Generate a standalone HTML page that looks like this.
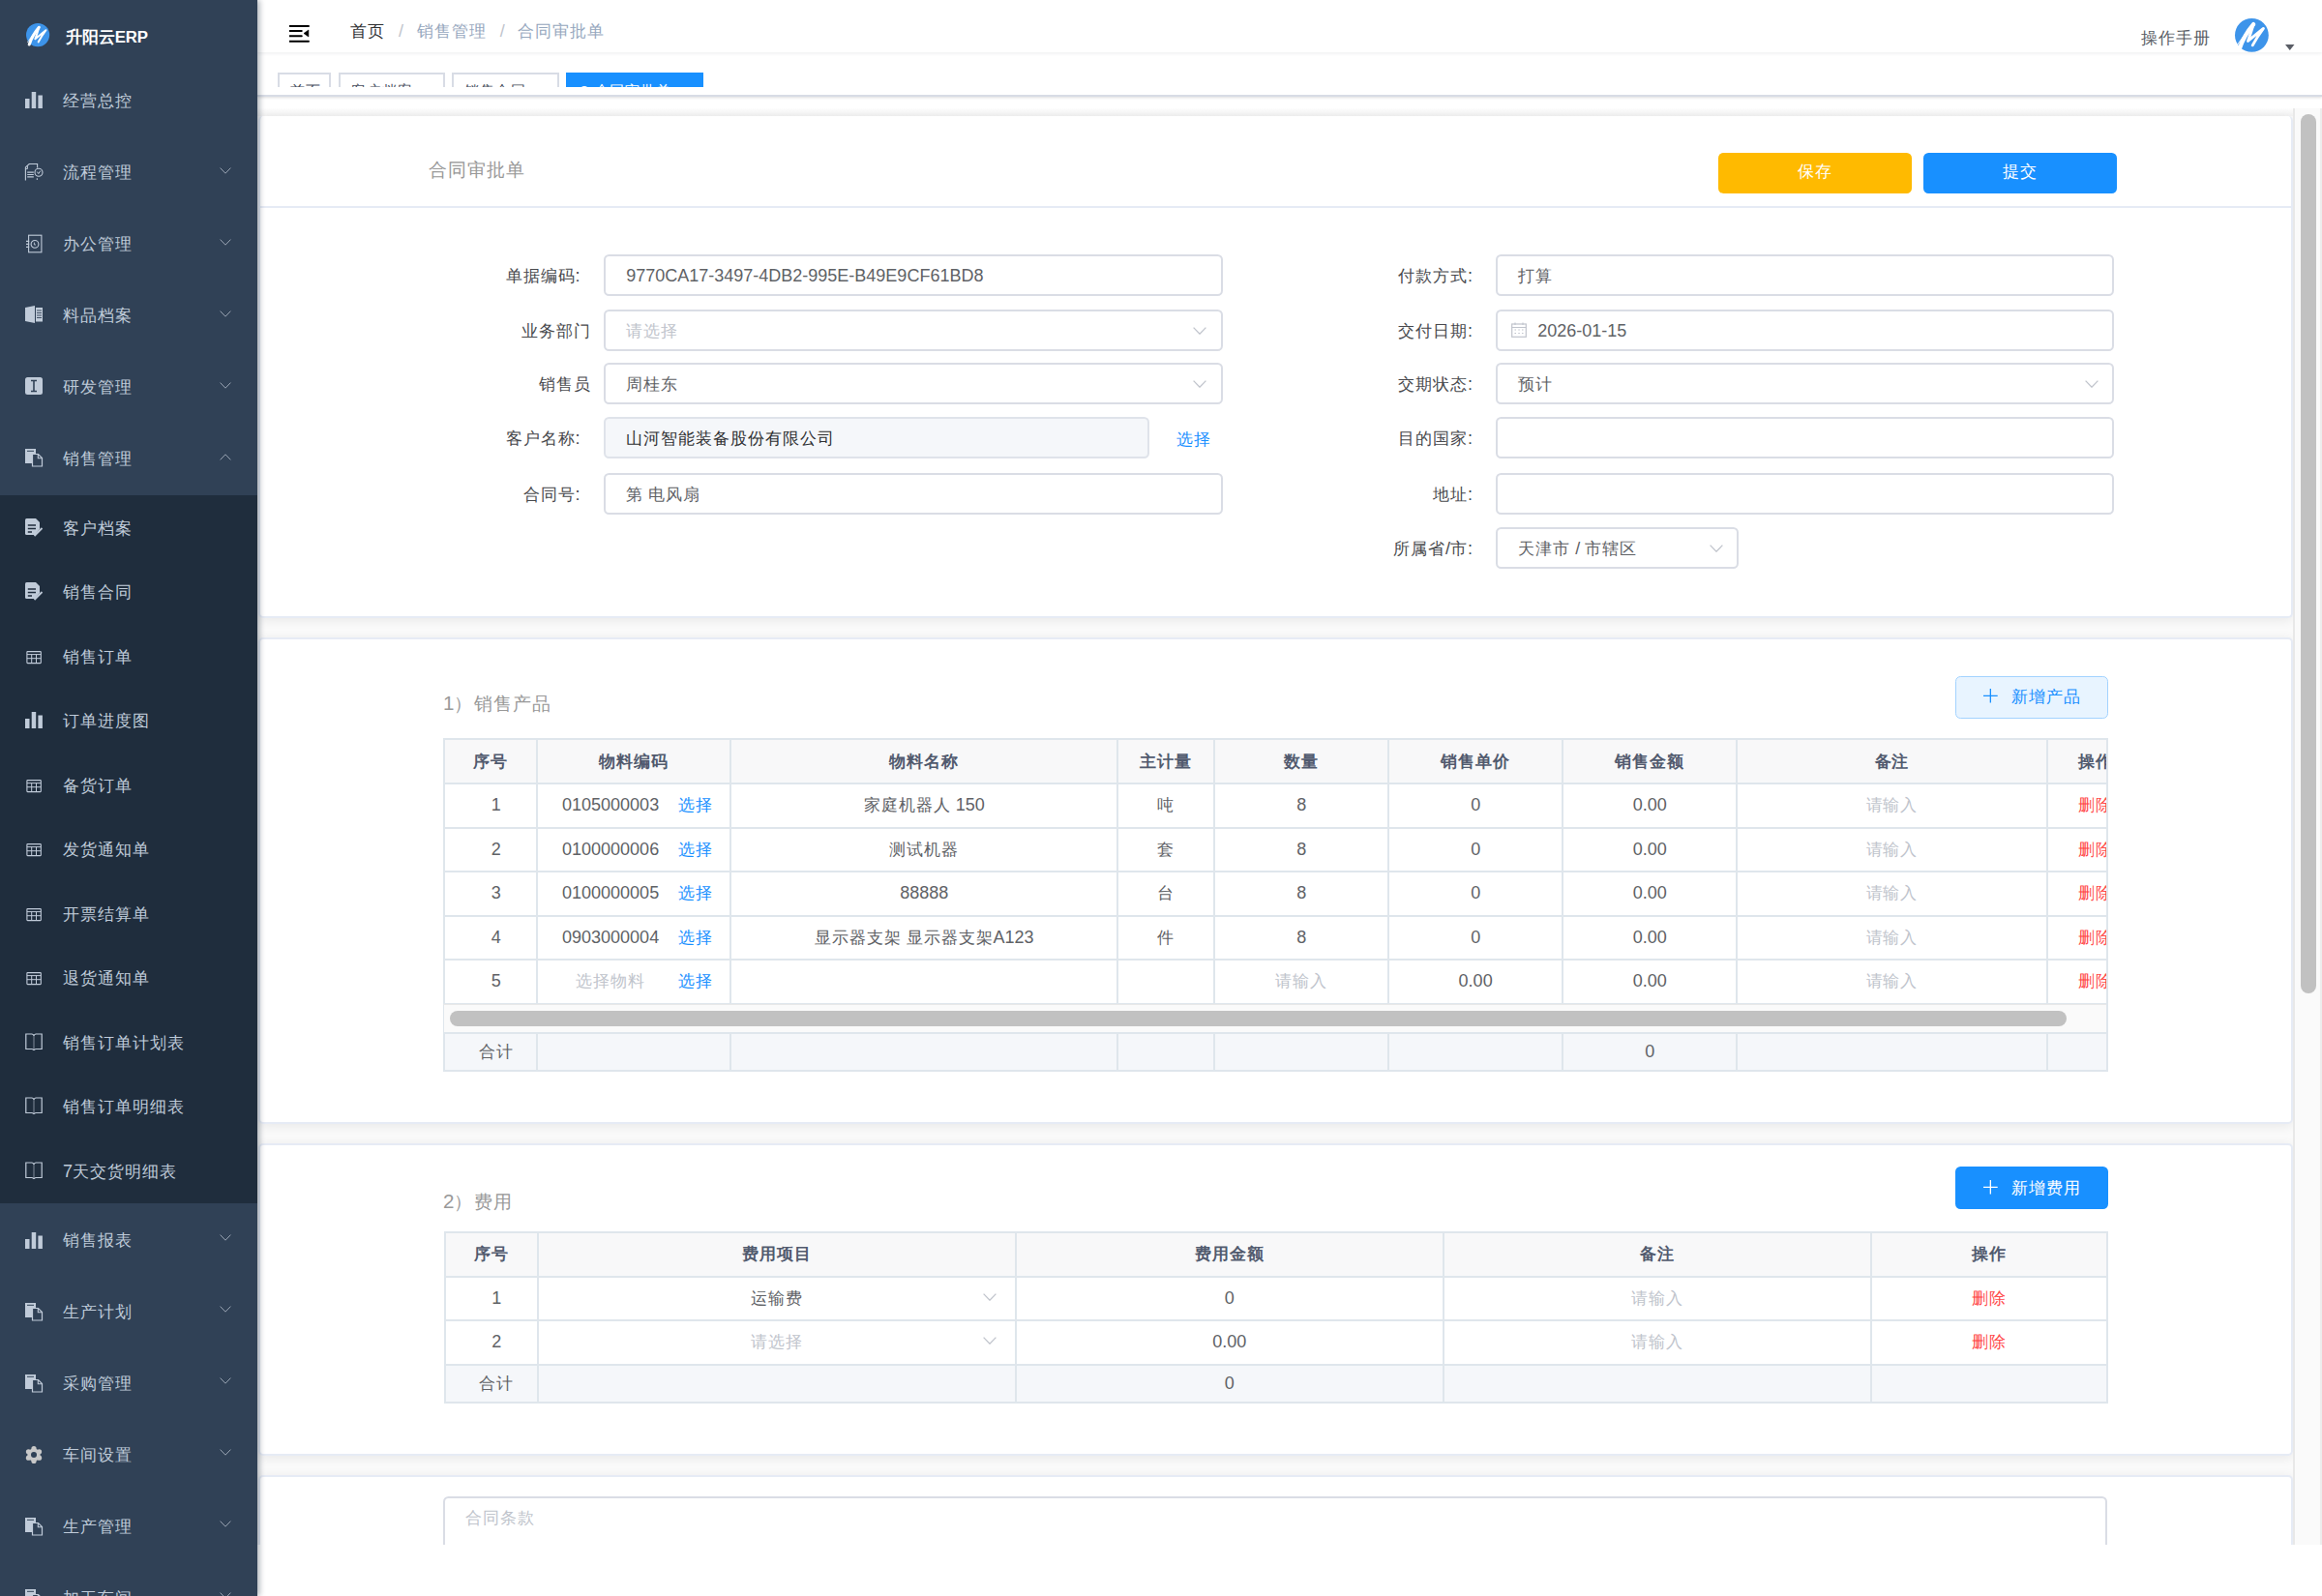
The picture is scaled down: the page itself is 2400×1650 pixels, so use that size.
<!DOCTYPE html>
<html><head><meta charset="utf-8"><style>
*{box-sizing:border-box;margin:0;padding:0}
html,body{width:2400px;height:1650px;overflow:hidden;background:#fff;font-family:"Liberation Sans",sans-serif;color:#606266}
.c{font-size:.944em;letter-spacing:.056em}
.abs{position:absolute}
#sidebar{position:absolute;left:0;top:0;width:266px;height:1650px;background:#304156;z-index:5;box-shadow:2px 0 6px rgba(0,21,41,.35)}
.mt{position:absolute;left:65px;color:#bfcbd9;font-size:18px;white-space:nowrap;margin-top:-1px}
.sub{position:absolute;left:0;top:512px;width:266px;height:732px;background:#1f2d3d}
#header{position:absolute;left:266px;top:0;width:2134px;height:54px;background:#fff;box-shadow:0 1px 4px rgba(0,21,41,.08);z-index:3}
#tags{position:absolute;left:266px;top:54px;width:2134px;height:46px;background:#fff;border-bottom:2px solid #d8dce5;box-shadow:0 1px 3px 0 rgba(0,0,0,.12),0 0 3px 0 rgba(0,0,0,.04);z-index:2}
.clip{position:absolute;left:0;top:21px;width:2134px;height:15px;overflow:hidden}
.tag{position:absolute;top:0;height:40px;border:2px solid #d8dce5;font-size:15.43px;line-height:20px;color:#495060;white-space:nowrap;padding-top:7px;padding-left:11px}
#main{position:absolute;left:266px;top:98px;width:2134px;height:1499px;background:#fff;overflow:hidden;z-index:1}
.card{position:absolute;left:0.5px;width:2103.5px;background:#fff;border:2px solid #e6ebf5;border-radius:5px;box-shadow:0 2px 12px 0 rgba(0,0,0,.08)}
.vscroll{position:absolute;left:2104px;top:14px;width:30px;height:1485px;background:#fafafa;border-left:2px solid #e8e8e8;border-right:2px solid #ededed}
.vscroll .th{position:absolute;left:6px;top:6px;width:16px;height:909px;border-radius:8px;background:#c1c1c1}
.lbl{position:absolute;font-size:18px;color:#48494d;white-space:nowrap;text-align:right;line-height:45px;height:43px}
.inp{position:absolute;height:43px;border:2px solid #dadde5;border-radius:5.5px;background:#fff;font-size:18px;color:#606266;line-height:41px;padding-left:21px;white-space:nowrap}
.inp.dis{background:#f5f7fa;border-color:#dfe3ea;color:#303133}
.ph{color:#c0c4cc}
.btn{position:absolute;border-radius:5.33px;font-size:18px;color:#fff;text-align:center;white-space:nowrap}
.ttl{position:absolute;font-size:20.57px;color:#999;white-space:nowrap;line-height:24px}
.tb{position:absolute;border-collapse:collapse;table-layout:fixed;font-size:18px;color:#606266}
.tb td,.tb th{border:2px solid #dfe6ec;text-align:center;white-space:nowrap;overflow:hidden;padding:0}
.tb th{background:#f8f8f9;color:#515a6e;font-weight:bold;height:46px}
.tb td{height:45.5px}
.tb tr.ft td{background:#f5f7fa;height:39.6px}
.lnk{color:#1890ff}
.del{color:#ff4949}
</style></head><body>
<div id="sidebar">
<svg class="abs" style="left:26.9px;top:24.2px;overflow:visible" width="24.2" height="24.2" viewBox="0 0 24 24"><circle cx="12" cy="12" r="12" fill="#3d94ea"/><path d="M3.2 21.8 Q6.5 12 13.2 4.2" stroke="#fff" stroke-width="3" fill="none" stroke-linecap="round"/><path d="M13.2 4.4 Q11.5 10 9.3 16.2 L20.3 7.2 Q16 13 12.6 19.2" stroke="#fff" stroke-width="2" fill="none" stroke-linecap="round" stroke-linejoin="round"/><path d="M1.3 19.6 L5.8 13.2 M2.6 22.6 L5 19.5" stroke="#fff" stroke-width="0.8" stroke-linecap="round" opacity=".8"/></svg>
<div class="mt" style="left:67.5px;top:25.5px;line-height:26px;color:#fff;font-weight:600"><span style="font-size:17px;letter-spacing:0.1px">升阳云</span><span style="font-size:16.8px;letter-spacing:-0.2px">ERP</span></div>
<div class="mt" style="top:68px;line-height:74px"><span class="c">经营总控</span></div>
<svg class="abs" style="left:26px;top:93.5px;overflow:visible" width="18" height="18" viewBox="0 0 18 18"><rect x="0" y="8" width="4.5" height="10" fill="#c0cbd9"/><rect x="6.7" y="1" width="4.5" height="17" fill="#c0cbd9"/><rect x="13.4" y="4.5" width="4.5" height="13.5" fill="#c0cbd9"/></svg>
<div class="mt" style="top:142px;line-height:74px"><span class="c">流程管理</span></div>
<svg class="abs" style="left:26px;top:167.5px;overflow:visible" width="18" height="18" viewBox="0 0 18 18"><path d="M0.4 18.4 V4.9 L4.2 1.5 H12.6 V5.6" stroke="#c0cbd9" stroke-width="1.1" fill="none"/><path d="M2.4 3.4 V6.6 H0.6" stroke="#c0cbd9" stroke-width="1" fill="none"/><path d="M2.2 10.1 H8.8 M2.2 12.5 H8.8 M2.2 14.9 H8.8" stroke="#c0cbd9" stroke-width="1.1"/><circle cx="14" cy="10.3" r="4" stroke="#c0cbd9" stroke-width="1.1" fill="none"/><path d="M12.3 9.6 L13.8 11.6 L15.8 8.6" stroke="#c0cbd9" stroke-width="1" fill="none"/><path d="M12.3 16.2 V18" stroke="#c0cbd9" stroke-width="1"/></svg>
<svg class="abs" style="left:227px;top:172.5px" width="12" height="7" viewBox="0 0 12 7"><path d="M0.6 0.6 L6.0 6.2 L11.4 0.6" stroke="#9aa5b4" stroke-width="1" fill="none"/></svg>
<div class="mt" style="top:216px;line-height:74px"><span class="c">办公管理</span></div>
<svg class="abs" style="left:26px;top:241.5px;overflow:visible" width="18" height="18" viewBox="0 0 18 18"><rect x="3.6" y="1.2" width="13.3" height="17.6" stroke="#c0cbd9" stroke-width="1.1" fill="none"/><circle cx="10" cy="10.4" r="3.9" stroke="#c0cbd9" stroke-width="1.1" fill="none"/><path d="M9.4 8.6 V11 H11" stroke="#c0cbd9" stroke-width="0.9" fill="none"/><path d="M1 7.3 H4.2 M1 10.4 H4.2 M1 13.3 H4.2" stroke="#c0cbd9" stroke-width="1.2"/></svg>
<svg class="abs" style="left:227px;top:246.5px" width="12" height="7" viewBox="0 0 12 7"><path d="M0.6 0.6 L6.0 6.2 L11.4 0.6" stroke="#9aa5b4" stroke-width="1" fill="none"/></svg>
<div class="mt" style="top:290px;line-height:74px"><span class="c">料品档案</span></div>
<svg class="abs" style="left:26px;top:315.5px;overflow:visible" width="18" height="18" viewBox="0 0 18 18"><path d="M0 2 L10 0 V18 L0 16 Z" fill="#c0cbd9"/><rect x="11" y="2" width="7" height="14.5" fill="#c0cbd9"/><path d="M12 5 H17 M12 7.5 H17 M12 10 H17 M12 12.5 H17" stroke="#304156" stroke-width="0.9"/></svg>
<svg class="abs" style="left:227px;top:320.5px" width="12" height="7" viewBox="0 0 12 7"><path d="M0.6 0.6 L6.0 6.2 L11.4 0.6" stroke="#9aa5b4" stroke-width="1" fill="none"/></svg>
<div class="mt" style="top:364px;line-height:74px"><span class="c">研发管理</span></div>
<svg class="abs" style="left:26px;top:389.5px;overflow:visible" width="18" height="18" viewBox="0 0 18 18"><rect x="0" y="0" width="18" height="18" rx="2.5" fill="#c0cbd9"/><path d="M6 3.5 H12 M9 3.5 V14.5 M6 14.5 H12" stroke="#304156" stroke-width="1.6"/></svg>
<svg class="abs" style="left:227px;top:394.5px" width="12" height="7" viewBox="0 0 12 7"><path d="M0.6 0.6 L6.0 6.2 L11.4 0.6" stroke="#9aa5b4" stroke-width="1" fill="none"/></svg>
<div class="mt" style="top:438px;line-height:74px"><span class="c">销售管理</span></div>
<svg class="abs" style="left:26px;top:463.5px;overflow:visible" width="18" height="18" viewBox="0 0 18 18"><rect x="0" y="0" width="11" height="15" fill="#c0cbd9"/><path d="M2 2.3 H9" stroke="#304156" stroke-width="1"/><path d="M7.5 5.5 H13.5 L17.5 9.5 V18 H7.5 Z" fill="#304156" stroke="#c0cbd9" stroke-width="1.2"/><path d="M13.3 5.8 V9.7 H17.3" stroke="#c0cbd9" stroke-width="1.1" fill="none"/></svg>
<svg class="abs" style="left:227px;top:469px" width="12" height="7" viewBox="0 0 12 7"><path d="M0.6 6.4 L6.0 0.8 L11.4 6.4" stroke="#9aa5b4" stroke-width="1" fill="none"/></svg>
<div class="sub"></div>
<div class="mt" style="top:513.50px;line-height:66.54px"><span class="c">客户档案</span></div>
<svg class="abs" style="left:26px;top:535.5px;overflow:visible" width="18" height="18" viewBox="0 0 18 18"><path d="M0 1.5 Q0 0 1.5 0 H11 L15 4 V11 L10 17 H1.5 Q0 17 0 15.5 Z" fill="#c0cbd9"/><path d="M2.8 7 H11 M2.8 10.5 H11 M2.8 14 H7" stroke="#1f2d3d" stroke-width="1.3"/><path d="M9.5 18 L17.5 10" stroke="#c0cbd9" stroke-width="1.8"/></svg>
<div class="mt" style="top:580.04px;line-height:66.54px"><span class="c">销售合同</span></div>
<svg class="abs" style="left:26px;top:602.04px;overflow:visible" width="18" height="18" viewBox="0 0 18 18"><path d="M0 1.5 Q0 0 1.5 0 H11 L15 4 V11 L10 17 H1.5 Q0 17 0 15.5 Z" fill="#c0cbd9"/><path d="M2.8 7 H11 M2.8 10.5 H11 M2.8 14 H7" stroke="#1f2d3d" stroke-width="1.3"/><path d="M9.5 18 L17.5 10" stroke="#c0cbd9" stroke-width="1.8"/></svg>
<div class="mt" style="top:646.58px;line-height:66.54px"><span class="c">销售订单</span></div>
<svg class="abs" style="left:26px;top:668.58px;overflow:visible" width="18" height="18" viewBox="0 0 18 18"><rect x="1.9" y="4.6" width="14.4" height="12" rx="0.6" stroke="#c0cbd9" stroke-width="1.1" fill="none"/><path d="M1.9 7.6 H16.3 M1.9 11.7 H16.3 M6.7 7.6 V16.6 M11.5 7.6 V16.6" stroke="#c0cbd9" stroke-width="1"/></svg>
<div class="mt" style="top:713.12px;line-height:66.54px"><span class="c">订单进度图</span></div>
<svg class="abs" style="left:26px;top:735.12px;overflow:visible" width="18" height="18" viewBox="0 0 18 18"><rect x="0" y="8" width="4.5" height="10" fill="#c0cbd9"/><rect x="6.7" y="1" width="4.5" height="17" fill="#c0cbd9"/><rect x="13.4" y="4.5" width="4.5" height="13.5" fill="#c0cbd9"/></svg>
<div class="mt" style="top:779.66px;line-height:66.54px"><span class="c">备货订单</span></div>
<svg class="abs" style="left:26px;top:801.66px;overflow:visible" width="18" height="18" viewBox="0 0 18 18"><rect x="1.9" y="4.6" width="14.4" height="12" rx="0.6" stroke="#c0cbd9" stroke-width="1.1" fill="none"/><path d="M1.9 7.6 H16.3 M1.9 11.7 H16.3 M6.7 7.6 V16.6 M11.5 7.6 V16.6" stroke="#c0cbd9" stroke-width="1"/></svg>
<div class="mt" style="top:846.20px;line-height:66.54px"><span class="c">发货通知单</span></div>
<svg class="abs" style="left:26px;top:868.2px;overflow:visible" width="18" height="18" viewBox="0 0 18 18"><rect x="1.9" y="4.6" width="14.4" height="12" rx="0.6" stroke="#c0cbd9" stroke-width="1.1" fill="none"/><path d="M1.9 7.6 H16.3 M1.9 11.7 H16.3 M6.7 7.6 V16.6 M11.5 7.6 V16.6" stroke="#c0cbd9" stroke-width="1"/></svg>
<div class="mt" style="top:912.74px;line-height:66.54px"><span class="c">开票结算单</span></div>
<svg class="abs" style="left:26px;top:934.74px;overflow:visible" width="18" height="18" viewBox="0 0 18 18"><rect x="1.9" y="4.6" width="14.4" height="12" rx="0.6" stroke="#c0cbd9" stroke-width="1.1" fill="none"/><path d="M1.9 7.6 H16.3 M1.9 11.7 H16.3 M6.7 7.6 V16.6 M11.5 7.6 V16.6" stroke="#c0cbd9" stroke-width="1"/></svg>
<div class="mt" style="top:979.28px;line-height:66.54px"><span class="c">退货通知单</span></div>
<svg class="abs" style="left:26px;top:1001.28px;overflow:visible" width="18" height="18" viewBox="0 0 18 18"><rect x="1.9" y="4.6" width="14.4" height="12" rx="0.6" stroke="#c0cbd9" stroke-width="1.1" fill="none"/><path d="M1.9 7.6 H16.3 M1.9 11.7 H16.3 M6.7 7.6 V16.6 M11.5 7.6 V16.6" stroke="#c0cbd9" stroke-width="1"/></svg>
<div class="mt" style="top:1045.82px;line-height:66.54px"><span class="c">销售订单计划表</span></div>
<svg class="abs" style="left:26px;top:1067.82px;overflow:visible" width="18" height="18" viewBox="0 0 18 18"><path d="M0.8 1 H7 Q9 1.5 9 3 Q9 1.5 11 1 H17.2 V16.5 H11 Q9 17 9 18 Q9 17 7 16.5 H0.8 Z" stroke="#c0cbd9" stroke-width="1.2" fill="none"/><path d="M9 3 V17.5" stroke="#c0cbd9" stroke-width="1" opacity=".6"/></svg>
<div class="mt" style="top:1112.36px;line-height:66.54px"><span class="c">销售订单明细表</span></div>
<svg class="abs" style="left:26px;top:1134.36px;overflow:visible" width="18" height="18" viewBox="0 0 18 18"><path d="M0.8 1 H7 Q9 1.5 9 3 Q9 1.5 11 1 H17.2 V16.5 H11 Q9 17 9 18 Q9 17 7 16.5 H0.8 Z" stroke="#c0cbd9" stroke-width="1.2" fill="none"/><path d="M9 3 V17.5" stroke="#c0cbd9" stroke-width="1" opacity=".6"/></svg>
<div class="mt" style="top:1178.90px;line-height:66.54px">7<span class="c">天交货明细表</span></div>
<svg class="abs" style="left:26px;top:1200.9px;overflow:visible" width="18" height="18" viewBox="0 0 18 18"><path d="M0.8 1 H7 Q9 1.5 9 3 Q9 1.5 11 1 H17.2 V16.5 H11 Q9 17 9 18 Q9 17 7 16.5 H0.8 Z" stroke="#c0cbd9" stroke-width="1.2" fill="none"/><path d="M9 3 V17.5" stroke="#c0cbd9" stroke-width="1" opacity=".6"/></svg>
<div class="mt" style="top:1245.5px;line-height:74px"><span class="c">销售报表</span></div>
<svg class="abs" style="left:26px;top:1272.5px;overflow:visible" width="18" height="18" viewBox="0 0 18 18"><rect x="0" y="8" width="4.5" height="10" fill="#c0cbd9"/><rect x="6.7" y="1" width="4.5" height="17" fill="#c0cbd9"/><rect x="13.4" y="4.5" width="4.5" height="13.5" fill="#c0cbd9"/></svg>
<svg class="abs" style="left:227px;top:1276px" width="12" height="7" viewBox="0 0 12 7"><path d="M0.6 0.6 L6.0 6.2 L11.4 0.6" stroke="#9aa5b4" stroke-width="1" fill="none"/></svg>
<div class="mt" style="top:1319.5px;line-height:74px"><span class="c">生产计划</span></div>
<svg class="abs" style="left:26px;top:1346.5px;overflow:visible" width="18" height="18" viewBox="0 0 18 18"><rect x="0" y="0" width="11" height="15" fill="#c0cbd9"/><path d="M2 2.3 H9" stroke="#304156" stroke-width="1"/><path d="M7.5 5.5 H13.5 L17.5 9.5 V18 H7.5 Z" fill="#304156" stroke="#c0cbd9" stroke-width="1.2"/><path d="M13.3 5.8 V9.7 H17.3" stroke="#c0cbd9" stroke-width="1.1" fill="none"/></svg>
<svg class="abs" style="left:227px;top:1350px" width="12" height="7" viewBox="0 0 12 7"><path d="M0.6 0.6 L6.0 6.2 L11.4 0.6" stroke="#9aa5b4" stroke-width="1" fill="none"/></svg>
<div class="mt" style="top:1393.5px;line-height:74px"><span class="c">采购管理</span></div>
<svg class="abs" style="left:26px;top:1420.5px;overflow:visible" width="18" height="18" viewBox="0 0 18 18"><rect x="0" y="0" width="11" height="15" fill="#c0cbd9"/><path d="M2 2.3 H9" stroke="#304156" stroke-width="1"/><path d="M7.5 5.5 H13.5 L17.5 9.5 V18 H7.5 Z" fill="#304156" stroke="#c0cbd9" stroke-width="1.2"/><path d="M13.3 5.8 V9.7 H17.3" stroke="#c0cbd9" stroke-width="1.1" fill="none"/></svg>
<svg class="abs" style="left:227px;top:1424px" width="12" height="7" viewBox="0 0 12 7"><path d="M0.6 0.6 L6.0 6.2 L11.4 0.6" stroke="#9aa5b4" stroke-width="1" fill="none"/></svg>
<div class="mt" style="top:1467.5px;line-height:74px"><span class="c">车间设置</span></div>
<svg class="abs" style="left:26px;top:1494.5px;overflow:visible" width="18" height="18" viewBox="0 0 18 18"><g fill="#c8c8c8"><circle cx="9" cy="9" r="6.6"/><circle cx="9" cy="2.6" r="2.6"/><circle cx="9" cy="15.4" r="2.6"/><circle cx="3.45" cy="5.8" r="2.6"/><circle cx="14.55" cy="5.8" r="2.6"/><circle cx="3.45" cy="12.2" r="2.6"/><circle cx="14.55" cy="12.2" r="2.6"/></g><circle cx="9" cy="9" r="3" fill="#304156"/></svg>
<svg class="abs" style="left:227px;top:1498px" width="12" height="7" viewBox="0 0 12 7"><path d="M0.6 0.6 L6.0 6.2 L11.4 0.6" stroke="#9aa5b4" stroke-width="1" fill="none"/></svg>
<div class="mt" style="top:1541.5px;line-height:74px"><span class="c">生产管理</span></div>
<svg class="abs" style="left:26px;top:1568.5px;overflow:visible" width="18" height="18" viewBox="0 0 18 18"><rect x="0" y="0" width="11" height="15" fill="#c0cbd9"/><path d="M2 2.3 H9" stroke="#304156" stroke-width="1"/><path d="M7.5 5.5 H13.5 L17.5 9.5 V18 H7.5 Z" fill="#304156" stroke="#c0cbd9" stroke-width="1.2"/><path d="M13.3 5.8 V9.7 H17.3" stroke="#c0cbd9" stroke-width="1.1" fill="none"/></svg>
<svg class="abs" style="left:227px;top:1572px" width="12" height="7" viewBox="0 0 12 7"><path d="M0.6 0.6 L6.0 6.2 L11.4 0.6" stroke="#9aa5b4" stroke-width="1" fill="none"/></svg>
<div class="mt" style="top:1615.5px;line-height:74px"><span class="c">加工车间</span></div>
<svg class="abs" style="left:26px;top:1642.5px;overflow:visible" width="18" height="18" viewBox="0 0 18 18"><rect x="0" y="0" width="11" height="15" fill="#c0cbd9"/><path d="M2 2.3 H9" stroke="#304156" stroke-width="1"/><path d="M7.5 5.5 H13.5 L17.5 9.5 V18 H7.5 Z" fill="#304156" stroke="#c0cbd9" stroke-width="1.2"/><path d="M13.3 5.8 V9.7 H17.3" stroke="#c0cbd9" stroke-width="1.1" fill="none"/></svg>
<svg class="abs" style="left:227px;top:1646px" width="12" height="7" viewBox="0 0 12 7"><path d="M0.6 0.6 L6.0 6.2 L11.4 0.6" stroke="#9aa5b4" stroke-width="1" fill="none"/></svg>
</div>
<div id="header">
<svg class="abs" style="left:33px;top:26px" width="21" height="18" viewBox="0 0 21 18"><path d="M0 1 H20 M0 6 H12.8 M0 11.2 H12.8 M0 16.7 H20" stroke="#000" stroke-width="1.9" stroke-linecap="round"/><path d="M19.9 5 L15 8.5 L19.9 12 Z" fill="#000" stroke="#000" stroke-width="0.6" stroke-linejoin="round"/></svg>
<div class="abs" style="left:96px;top:19px;font-size:18px;line-height:26px;white-space:nowrap"><span style="color:#303133"><span class="c">首页</span></span><span style="color:#c0c4cc;padding:0 14px">/</span><span style="color:#97a8be"><span class="c">销售管理</span></span><span style="color:#c0c4cc;padding:0 13px 0 14px">/</span><span style="color:#97a8be"><span class="c">合同审批单</span></span></div>
<div class="abs" style="left:1947px;top:26px;font-size:18px;line-height:26px;color:#5a5e66;white-space:nowrap"><span class="c">操作手册</span></div>
<svg class="abs" style="left:2044.1999999999998px;top:19px;overflow:visible" width="34.8" height="34.8" viewBox="0 0 24 24"><circle cx="12" cy="12" r="12" fill="#3d94ea"/><path d="M3.2 21.8 Q6.5 12 13.2 4.2" stroke="#fff" stroke-width="3" fill="none" stroke-linecap="round"/><path d="M13.2 4.4 Q11.5 10 9.3 16.2 L20.3 7.2 Q16 13 12.6 19.2" stroke="#fff" stroke-width="2" fill="none" stroke-linecap="round" stroke-linejoin="round"/><path d="M1.3 19.6 L5.8 13.2 M2.6 22.6 L5 19.5" stroke="#fff" stroke-width="0.8" stroke-linecap="round" opacity=".8"/></svg>
<svg class="abs" style="left:2096px;top:46px" width="10" height="6" viewBox="0 0 10 6"><path d="M0 0 H9.5 L4.75 6 Z" fill="#5a5e66"/></svg>
</div>
<div id="tags">
<div class="clip">
<div class="tag" style="left:21.1px;width:54.7px"><span class="c">首页</span></div>
<div class="tag" style="left:84.2px;width:109.6px"><span class="c">客户档案</span></div>
<div class="tag" style="left:201.2px;width:110.4px"><span class="c">销售合同</span></div>
<div class="tag" style="left:319.1px;width:141.9px;background:#1890ff;border-color:#1890ff;color:#fff"><span style="position:absolute;left:13px;top:12px;width:7.7px;height:7.7px;border-radius:4px;background:#fff"></span><span style="display:inline-block;width:16.5px"></span><span class="c">合同审批单</span></div>
</div>
</div>
<div id="main">
<div class="abs" style="left:0;top:14px;width:2104px;height:1485px;background:#fafafa"></div>
<div class="abs" style="left:0;top:14px;width:2104px;height:8px;background:linear-gradient(#fdfdfd,#f3f3f3)"></div>
<div class="card" style="border-top:0;top:21.799999999999997px;height:518.8000000000001px"></div>
<div class="card" style="top:561px;height:502.79999999999995px"></div>
<div class="card" style="top:1084.2px;height:322.79999999999995px"></div>
<div class="card" style="top:1427.3px;height:174.70000000000005px"></div>
<div class="vscroll"><div class="th"></div></div>
</div>
<div class="abs" style="left:0;top:0;width:2400px;height:1596.7px;overflow:hidden;z-index:2;pointer-events:none">
<div class="ttl" style="left:443px;top:163px"><span class="c">合同审批单</span></div>
<div class="abs" style="left:268px;top:213px;width:2101px;height:2px;background:#e6ebf5"></div>
<div class="btn" style="left:1776px;top:158px;width:200px;height:42px;line-height:39px;background:#ffba00"><span class="c">保存</span></div>
<div class="btn" style="left:1988px;top:158px;width:200px;height:42px;line-height:39px;background:#1890ff"><span class="c">提交</span></div>
<div class="lbl" style="left:399.5px;width:200px;top:263px"><span class="c">单据编码</span>:</div>
<div class="inp" style="left:624.2px;top:263px;width:639.5px">9770CA17-3497-4DB2-995E-B49E9CF61BD8</div>
<div class="lbl" style="left:411px;width:200px;top:320px"><span class="c">业务部门</span></div>
<div class="inp" style="left:624.2px;top:320px;width:639.5px"><span class="ph"><span class="c">请选择</span></span></div>
<svg class="abs" style="left:1233px;top:338px" width="14" height="8" viewBox="0 0 14 8"><path d="M0.6 0.6 L7.0 7.2 L13.4 0.6" stroke="#c0c4cc" stroke-width="1.3" fill="none"/></svg>
<div class="lbl" style="left:411px;width:200px;top:375.2px"><span class="c">销售员</span></div>
<div class="inp" style="left:624.2px;top:375.2px;width:639.5px"><span class="c">周桂东</span></div>
<svg class="abs" style="left:1233px;top:393.2px" width="14" height="8" viewBox="0 0 14 8"><path d="M0.6 0.6 L7.0 7.2 L13.4 0.6" stroke="#c0c4cc" stroke-width="1.3" fill="none"/></svg>
<div class="lbl" style="left:399.5px;width:200px;top:431.3px"><span class="c">客户名称</span>:</div>
<div class="inp dis" style="left:624.2px;top:431.3px;width:563.4px"><span class="c">山河智能装备股份有限公司</span></div>
<div class="abs lnk" style="left:1216px;top:433.3px;line-height:42.67px;font-size:18px"><span class="c">选择</span></div>
<div class="lbl" style="left:399.5px;width:200px;top:489px"><span class="c">合同号</span>:</div>
<div class="inp" style="left:624.2px;top:489px;width:639.5px"><span class="c">第</span> <span class="c">电风扇</span></div>
<div class="lbl" style="left:1322px;width:200px;top:263px"><span class="c">付款方式</span>:</div>
<div class="inp" style="left:1546.3px;top:263px;width:639px"><span class="c">打算</span></div>
<div class="lbl" style="left:1322px;width:200px;top:320px"><span class="c">交付日期</span>:</div>
<div class="inp" style="left:1546.3px;top:320px;width:639px;padding-left:41px">2026-01-15</div>
<svg class="abs" style="left:1562px;top:333.2px" width="16" height="16" viewBox="0 0 16 16"><rect x="0.7" y="2" width="14.6" height="13.3" stroke="#c0c4cc" stroke-width="1.2" fill="none"/><path d="M0.7 5.5 H15.3 M4 0.5 V3 M12 0.5 V3" stroke="#c0c4cc" stroke-width="1.1"/><path d="M3.5 8 h1.5 M7.3 8 h1.5 M11 8 h1.5 M3.5 11.5 h1.5 M7.3 11.5 h1.5 M11 11.5 h1.5" stroke="#c0c4cc" stroke-width="1.2"/></svg>
<div class="lbl" style="left:1322px;width:200px;top:375.2px"><span class="c">交期状态</span>:</div>
<div class="inp" style="left:1546.3px;top:375.2px;width:639px"><span class="c">预计</span></div>
<svg class="abs" style="left:2155px;top:393.2px" width="14" height="8" viewBox="0 0 14 8"><path d="M0.6 0.6 L7.0 7.2 L13.4 0.6" stroke="#c0c4cc" stroke-width="1.3" fill="none"/></svg>
<div class="lbl" style="left:1322px;width:200px;top:431.3px"><span class="c">目的国家</span>:</div>
<div class="inp" style="left:1546.3px;top:431.3px;width:639px"></div>
<div class="lbl" style="left:1322px;width:200px;top:489px"><span class="c">地址</span>:</div>
<div class="inp" style="left:1546.3px;top:489px;width:639px"></div>
<div class="lbl" style="left:1322px;width:200px;top:544.7px"><span class="c">所属省</span>/<span class="c">市</span>:</div>
<div class="inp" style="left:1546.3px;top:544.7px;width:250.7px"><span class="c">天津市</span> / <span class="c">市辖区</span></div>
<svg class="abs" style="left:1767px;top:562.7px" width="14" height="8" viewBox="0 0 14 8"><path d="M0.6 0.6 L7.0 7.2 L13.4 0.6" stroke="#c0c4cc" stroke-width="1.3" fill="none"/></svg>
<div class="ttl" style="left:458px;top:715px">1<span class="c">）销售产品</span></div>
<div class="btn" style="left:2021.2px;top:699.1px;width:157.4px;height:43.6px;background:#e8f4ff;border:1.6px solid #a3d3ff"></div>
<svg class="abs" style="left:2050.3px;top:712px" width="15" height="15" viewBox="0 0 15 15"><path d="M0 7.3 H14.7 M7.35 0 V14.5" stroke="#1890ff" stroke-width="1.3"/></svg>
<div class="abs lnk" style="left:2079px;top:707px;font-size:18px;line-height:26px;white-space:nowrap"><span class="c">新增产品</span></div>
<div class="abs" style="left:458px;top:763px;width:1721px;height:345px;overflow:hidden">
<table class="tb" style="left:0;top:0;width:1756.6999999999998px"><colgroup><col style="width:96.3px"><col style="width:200px"><col style="width:400px"><col style="width:100px"><col style="width:179.9px"><col style="width:179.9px"><col style="width:180.2px"><col style="width:320.4px"><col style="width:100px"></colgroup>
<tr><th><span class="c">序号</span></th><th><span class="c">物料编码</span></th><th><span class="c">物料名称</span></th><th><span class="c">主计量</span></th><th><span class="c">数量</span></th><th><span class="c">销售单价</span></th><th><span class="c">销售金额</span></th><th><span class="c">备注</span></th><th><span class="c">操作</span></th></tr>
<tr><td style="padding-left:11px">1</td><td><span style="display:inline-block;width:114px;text-align:center">0105000003</span><span class="lnk" style="margin-left:12.5px"><span class="c">选择</span></span></td><td><span class="c">家庭机器人</span> 150</td><td><span class="c">吨</span></td><td>8</td><td>0</td><td>0.00</td><td><span class="ph"><span class="c">请输入</span></span></td><td><span class="del"><span class="c">删除</span></span></td></tr>
<tr><td style="padding-left:11px">2</td><td><span style="display:inline-block;width:114px;text-align:center">0100000006</span><span class="lnk" style="margin-left:12.5px"><span class="c">选择</span></span></td><td><span class="c">测试机器</span></td><td><span class="c">套</span></td><td>8</td><td>0</td><td>0.00</td><td><span class="ph"><span class="c">请输入</span></span></td><td><span class="del"><span class="c">删除</span></span></td></tr>
<tr><td style="padding-left:11px">3</td><td><span style="display:inline-block;width:114px;text-align:center">0100000005</span><span class="lnk" style="margin-left:12.5px"><span class="c">选择</span></span></td><td>88888</td><td><span class="c">台</span></td><td>8</td><td>0</td><td>0.00</td><td><span class="ph"><span class="c">请输入</span></span></td><td><span class="del"><span class="c">删除</span></span></td></tr>
<tr><td style="padding-left:11px">4</td><td><span style="display:inline-block;width:114px;text-align:center">0903000004</span><span class="lnk" style="margin-left:12.5px"><span class="c">选择</span></span></td><td><span class="c">显示器支架</span> <span class="c">显示器支架</span>A123</td><td><span class="c">件</span></td><td>8</td><td>0</td><td>0.00</td><td><span class="ph"><span class="c">请输入</span></span></td><td><span class="del"><span class="c">删除</span></span></td></tr>
<tr><td style="padding-left:11px">5</td><td><span style="display:inline-block;width:114px;text-align:center"><span class="ph"><span class="c">选择物料</span></span></span><span class="lnk" style="margin-left:12.5px"><span class="c">选择</span></span></td><td></td><td></td><td><span class="ph"><span class="c">请输入</span></span></td><td>0.00</td><td>0.00</td><td><span class="ph"><span class="c">请输入</span></span></td><td><span class="del"><span class="c">删除</span></span></td></tr>
</table>
<div class="abs" style="left:0;top:275px;width:1721px;height:28.5px;background:#fafafa;border-left:1.6px solid #dfe6ec;border-top:1.8px solid #e8e8e8"><div class="abs" style="left:6.2px;top:6.3px;width:1670.5px;height:15.5px;border-radius:8px;background:#c1c1c1"></div></div>
<table class="tb" style="left:0;top:303.5px;width:1756.6999999999998px"><colgroup><col style="width:96.3px"><col style="width:200px"><col style="width:400px"><col style="width:100px"><col style="width:179.9px"><col style="width:179.9px"><col style="width:180.2px"><col style="width:320.4px"><col style="width:100px"></colgroup><tr class="ft"><td style="padding-left:11px"><span class="c">合计</span></td><td></td><td></td><td></td><td></td><td></td><td>0</td><td></td><td></td></tr></table>
</div>
<div class="abs" style="left:2177.2px;top:763px;width:1.6px;height:343.5px;background:#dfe6ec"></div>
<div class="ttl" style="left:458px;top:1230px">2<span class="c">）费用</span></div>
<div class="btn" style="left:2020.9px;top:1205.9px;width:158.1px;height:44px;background:#1890ff"></div>
<svg class="abs" style="left:2050.3px;top:1220.2px" width="15" height="15" viewBox="0 0 15 15"><path d="M0 7.3 H14.7 M7.35 0 V14.5" stroke="#fff" stroke-width="1.3"/></svg>
<div class="abs" style="left:2079px;top:1215px;font-size:18px;line-height:26px;white-space:nowrap;color:#fff"><span class="c">新增费用</span></div>
<table class="tb" style="left:458.5px;top:1273px;width:1718.9px"><colgroup><col style="width:96.4px"><col style="width:493.8px"><col style="width:442.3px"><col style="width:442.2px"><col style="width:244.2px"></colgroup>
<tr><th style="height:45.5px"><span class="c">序号</span></th><th style="height:45.5px"><span class="c">费用项目</span></th><th style="height:45.5px"><span class="c">费用金额</span></th><th style="height:45.5px"><span class="c">备注</span></th><th style="height:45.5px"><span class="c">操作</span></th></tr>
<tr><td style="padding-left:11px;height:44.8px">1</td><td><span class="c">运输费</span></td><td>0</td><td><span class="ph"><span class="c">请输入</span></span></td><td><span class="del"><span class="c">删除</span></span></td></tr>
<tr><td style="padding-left:11px;height:44.8px">2</td><td><span class="ph"><span class="c">请选择</span></span></td><td>0.00</td><td><span class="ph"><span class="c">请输入</span></span></td><td><span class="del"><span class="c">删除</span></span></td></tr>
<tr class="ft"><td style="padding-left:11px;height:39px"><span class="c">合计</span></td><td></td><td>0</td><td></td><td></td></tr>
</table>
<svg class="abs" style="left:1016px;top:1337px" width="14" height="8" viewBox="0 0 14 8"><path d="M0.6 0.6 L7.0 7.2 L13.4 0.6" stroke="#c0c4cc" stroke-width="1.3" fill="none"/></svg>
<svg class="abs" style="left:1016px;top:1382px" width="14" height="8" viewBox="0 0 14 8"><path d="M0.6 0.6 L7.0 7.2 L13.4 0.6" stroke="#c0c4cc" stroke-width="1.3" fill="none"/></svg>
<div class="abs" style="left:458.2px;top:1547px;width:1720.3px;height:100px;border:2px solid #dadde5;border-radius:5.5px;font-size:18px;line-height:26px;padding:7px 20.5px"><span class="ph"><span class="c">合同条款</span></span></div>
</div>
</body></html>
